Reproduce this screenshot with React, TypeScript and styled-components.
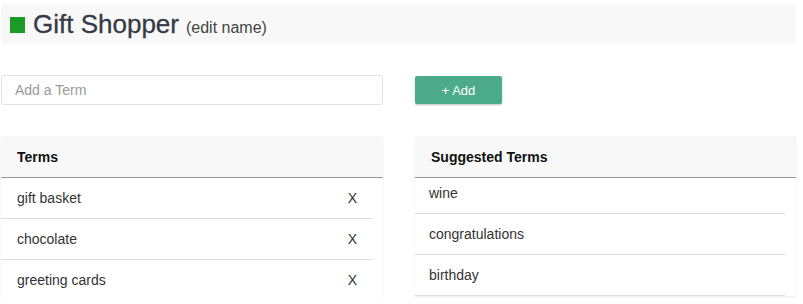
import styled, { createGlobalStyle } from "styled-components";

const GlobalStyle = createGlobalStyle`
    body {
        margin: 0;
        background: #fff;
        font-family: "Liberation Sans", Arial, sans-serif;
        color: #333;
    }
`;

const terms = ["gift basket", "chocolate", "greeting cards"];
const suggested = ["wine", "congratulations", "birthday"];

const Page = styled.div`
    padding: 4px 7px 0 1px;
`;

const TitleBar = styled.div`
    height: 40px;
    background-color: #f8f8f8;
    display: flex;
    align-items: center;
    padding-left: 9px;
`;

const Swatch = styled.span`
    width: 15px;
    height: 16px;
    background-color: #1b9a25;
    margin-right: 8px;
    margin-top: 1px;
`;

const Title = styled.h1`
    margin: 0;
    font-size: 26px;
    font-weight: normal;
    color: #343b46;
    -webkit-text-stroke: 0.3px #343b46;
`;

const EditName = styled.span`
    font-size: 16px;
    color: #444;
    margin-left: 7px;
    -webkit-text-stroke: 0;
`;

const Columns = styled.div`
    display: grid;
    grid-template-columns: 382px 381px;
    column-gap: 32px;
    margin-top: ${({ $top }: { $top: number }) => $top}px;
`;

const TermInput = styled.input`
    height: 30px;
    box-sizing: border-box;
    border: 1px solid #e2e2e2;
    border-radius: 3px;
    padding: 0 13px;
    font-family: inherit;
    font-size: 14px;
    color: #333;
    outline: none;
    &::placeholder {
        color: #9a9a9a;
    }
`;

const AddButton = styled.button`
    width: 87px;
    height: 28px;
    margin-top: 1px;
    border: none;
    border-radius: 2px;
    background-color: #4cab8b;
    box-shadow: 0 1px 2px rgba(0, 0, 0, 0.25);
    color: #fff;
    font-family: inherit;
    font-size: 13px;
    cursor: pointer;
`;

const Panel = styled.div`
    background: #fff;
    box-shadow: 0 1px 2px rgba(0, 0, 0, 0.08);
    align-self: start;
`;

const PanelHeader = styled.div`
    height: 41px;
    display: flex;
    align-items: center;
    padding: 0 16px;
    background-color: #f8f8f8;
    border-bottom: 1px solid #999;
    font-size: 14px;
    font-weight: bold;
    color: #111;
`;

const List = styled.ul`
    list-style: none;
    margin: 0;
    padding: 0 ${({ $gap }: { $gap: number }) => $gap}px 0 0;
`;

const Row = styled.li<{ $tight?: boolean }>`
    display: flex;
    justify-content: space-between;
    align-items: center;
    height: ${({ $tight }) => ($tight ? 30 : 40)}px;
    padding: ${({ $tight }) => ($tight ? "0 16px 5px" : "0 16px")};
    border-bottom: 1px solid #ddd;
    font-size: 14px;
    color: #333;
    &:last-child {
        border-bottom: none;
    }
`;

const SuggestedRow = styled(Row)`
    padding-left: 14px;
    &:last-child {
        border-bottom: 1px solid #ddd;
    }
`;

const Remove = styled.span`
    font-size: 14px;
    color: #333;
    cursor: pointer;
`;

const App = () => {
    return (
        <Page>
            <GlobalStyle />
            <TitleBar>
                <Swatch />
                <Title>
                    Gift Shopper<EditName>(edit name)</EditName>
                </Title>
            </TitleBar>

            <Columns $top={31}>
                <TermInput placeholder="Add a Term" />
                <div>
                    <AddButton>+ Add</AddButton>
                </div>
            </Columns>

            <Columns $top={31}>
                <Panel>
                    <PanelHeader>Terms</PanelHeader>
                    <List $gap={10}>
                        {terms.map((term) => (
                            <Row key={term}>
                                {term}
                                <Remove>X</Remove>
                            </Row>
                        ))}
                    </List>
                </Panel>
                <Panel>
                    <PanelHeader>Suggested Terms</PanelHeader>
                    <List $gap={11}>
                        {suggested.map((term, index) => (
                            <SuggestedRow key={term} $tight={index === 0}>
                                {term}
                            </SuggestedRow>
                        ))}
                    </List>
                </Panel>
            </Columns>
        </Page>
    );
};

export default App;
